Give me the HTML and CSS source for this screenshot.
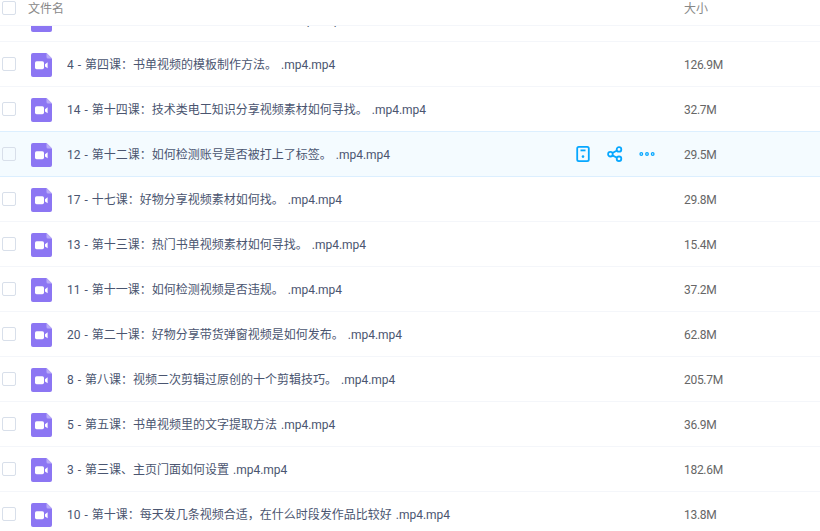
FILE: index.html
```html
<!DOCTYPE html>
<html lang="zh">
<head>
<meta charset="utf-8">
<title>文件列表</title>
<link rel="stylesheet" href="styles.css">
</head>
<body>
<div class="table">
  <div class="head">
    <span class="check"></span>
    <span class="head-name">文件名</span>
    <span class="head-size">大小</span>
  </div>
  <div class="list">
    <div class="row first"><span class="check"></span><svg class="file" viewBox="0 0 21 24"><use href="#v"/></svg><span class="name">9 - 第九课：如何下载短视频和音乐素材。 .mp4.mp4</span><span class="size"></span></div>
    <div class="row"><span class="check"></span><svg class="file" viewBox="0 0 21 24"><use href="#v"/></svg><span class="name">4 - 第四课：书单视频的模板制作方法。 .mp4.mp4</span><span class="size">126.9M</span></div>
    <div class="row"><span class="check"></span><svg class="file" viewBox="0 0 21 24"><use href="#v"/></svg><span class="name">14 - 第十四课：技术类电工知识分享视频素材如何寻找。 .mp4.mp4</span><span class="size">32.7M</span></div>
    <div class="row active"><span class="check"></span><svg class="file" viewBox="0 0 21 24"><use href="#v"/></svg><span class="name">12 - 第十二课：如何检测账号是否被打上了标签。 .mp4.mp4</span>
      <span class="actions">
        <svg class="act" viewBox="0 0 16 16"><rect x="2.200" y="0.900" width="11.600" height="14.200" rx="1.600"/><path d="M5.500 4.400h5"/><circle class="dot" cx="8" cy="10.600" r="1.300"/></svg>
        <svg class="act" viewBox="0 0 16 16"><circle cx="3.400" cy="8.200" r="2.300"/><circle cx="12" cy="3.400" r="2.300"/><circle cx="12" cy="12.800" r="2.300"/><path d="M5.400 7 10 4.500M5.400 9.400l4.600 2.300"/></svg>
        <svg class="act act-more" viewBox="0 0 16 16"><circle cx="2.300" cy="8" r="1.300"/><circle cx="8" cy="8" r="1.300"/><circle cx="13.700" cy="8" r="1.300"/></svg>
      </span>
      <span class="size">29.5M</span></div>
    <div class="row"><span class="check"></span><svg class="file" viewBox="0 0 21 24"><use href="#v"/></svg><span class="name">17 - 十七课：好物分享视频素材如何找。 .mp4.mp4</span><span class="size">29.8M</span></div>
    <div class="row"><span class="check"></span><svg class="file" viewBox="0 0 21 24"><use href="#v"/></svg><span class="name">13 - 第十三课：热门书单视频素材如何寻找。 .mp4.mp4</span><span class="size">15.4M</span></div>
    <div class="row"><span class="check"></span><svg class="file" viewBox="0 0 21 24"><use href="#v"/></svg><span class="name">11 - 第十一课：如何检测视频是否违规。 .mp4.mp4</span><span class="size">37.2M</span></div>
    <div class="row"><span class="check"></span><svg class="file" viewBox="0 0 21 24"><use href="#v"/></svg><span class="name">20 - 第二十课：好物分享带货弹窗视频是如何发布。 .mp4.mp4</span><span class="size">62.8M</span></div>
    <div class="row"><span class="check"></span><svg class="file" viewBox="0 0 21 24"><use href="#v"/></svg><span class="name">8 - 第八课：视频二次剪辑过原创的十个剪辑技巧。 .mp4.mp4</span><span class="size">205.7M</span></div>
    <div class="row"><span class="check"></span><svg class="file" viewBox="0 0 21 24"><use href="#v"/></svg><span class="name">5 - 第五课：书单视频里的文字提取方法 .mp4.mp4</span><span class="size">36.9M</span></div>
    <div class="row"><span class="check"></span><svg class="file" viewBox="0 0 21 24"><use href="#v"/></svg><span class="name">3 - 第三课、主页门面如何设置 .mp4.mp4</span><span class="size">182.6M</span></div>
    <div class="row"><span class="check"></span><svg class="file" viewBox="0 0 21 24"><use href="#v"/></svg><span class="name">10 - 第十课：每天发几条视频合适，在什么时段发作品比较好 .mp4.mp4</span><span class="size">13.8M</span></div>
  </div>
</div>
<svg class="defs" width="0" height="0" aria-hidden="true">
  <symbol id="v" viewBox="0 0 21 24">
    <path fill="#8c76f3" d="M2 0h13.500L21 5.500V22a2 2 0 0 1-2 2H2a2 2 0 0 1-2-2V2a2 2 0 0 1 2-2z"/>
    <path fill="#b9abf8" d="M15.500 0 21 5.500h-4a1.500 1.500 0 0 1-1.500-1.500z"/>
    <rect fill="#fff" x="4" y="8.200" width="9" height="8" rx="1.600"/>
    <path fill="#fff" d="M14 11.200 16.600 9.200v6L14 13.400z"/>
  </symbol>
</svg>
</body>
</html>
```
FILE: styles.css
```css
* { box-sizing: border-box; }
html, body { margin: 0; height: 100%; background: #fff; overflow: hidden; }
body { font-family: "Roboto", "Noto Sans CJK SC", sans-serif; font-size: 12px; line-height: 16px; color: #4a5570; }
.table { display: flex; flex-direction: column; height: 531px; }
.head { flex: none; display: flex; align-items: center; height: 26px; padding: 0 0 9px 2px; border-bottom: 1px solid #f4f6fa; color: #888; }
.head-name { margin: 2px 0 0 12px; width: 656px; }
.head-size { flex: none; margin-top: 2px; }
.list { flex: 1; overflow: hidden; }
.row { position: relative; display: flex; align-items: center; height: 45px; padding-left: 2px; border-bottom: 1px solid #f4f6fa; }
.row.first { margin-top: -29px; }
.row.active { background: #f4fbff; border-bottom-color: #dcefff; box-shadow: 0 -1px 0 #dcefff; }
.check { flex: none; width: 14px; height: 14px; border: 1px solid #d8dfea; border-radius: 2px; background: #fff; }
.row.active .check { background: transparent; }
.file { flex: none; width: 21px; height: 24px; margin: 2px 0 0 15px; }
.name { flex: none; width: 617px; margin: 2px 0 0 15px; word-spacing: 1px; white-space: nowrap; overflow: hidden; }
.size { color: #666; letter-spacing: -0.3px; margin-top: 2px; }
.actions { position: absolute; left: 575px; top: 14px; display: flex; gap: 16px; }
.act { width: 16px; height: 16px; fill: none; stroke: #06a7ff; stroke-width: 1.800; }
.act-more { stroke-width: 1.300; }
.act .dot { fill: #06a7ff; stroke: none; }
.defs { position: absolute; }
```
